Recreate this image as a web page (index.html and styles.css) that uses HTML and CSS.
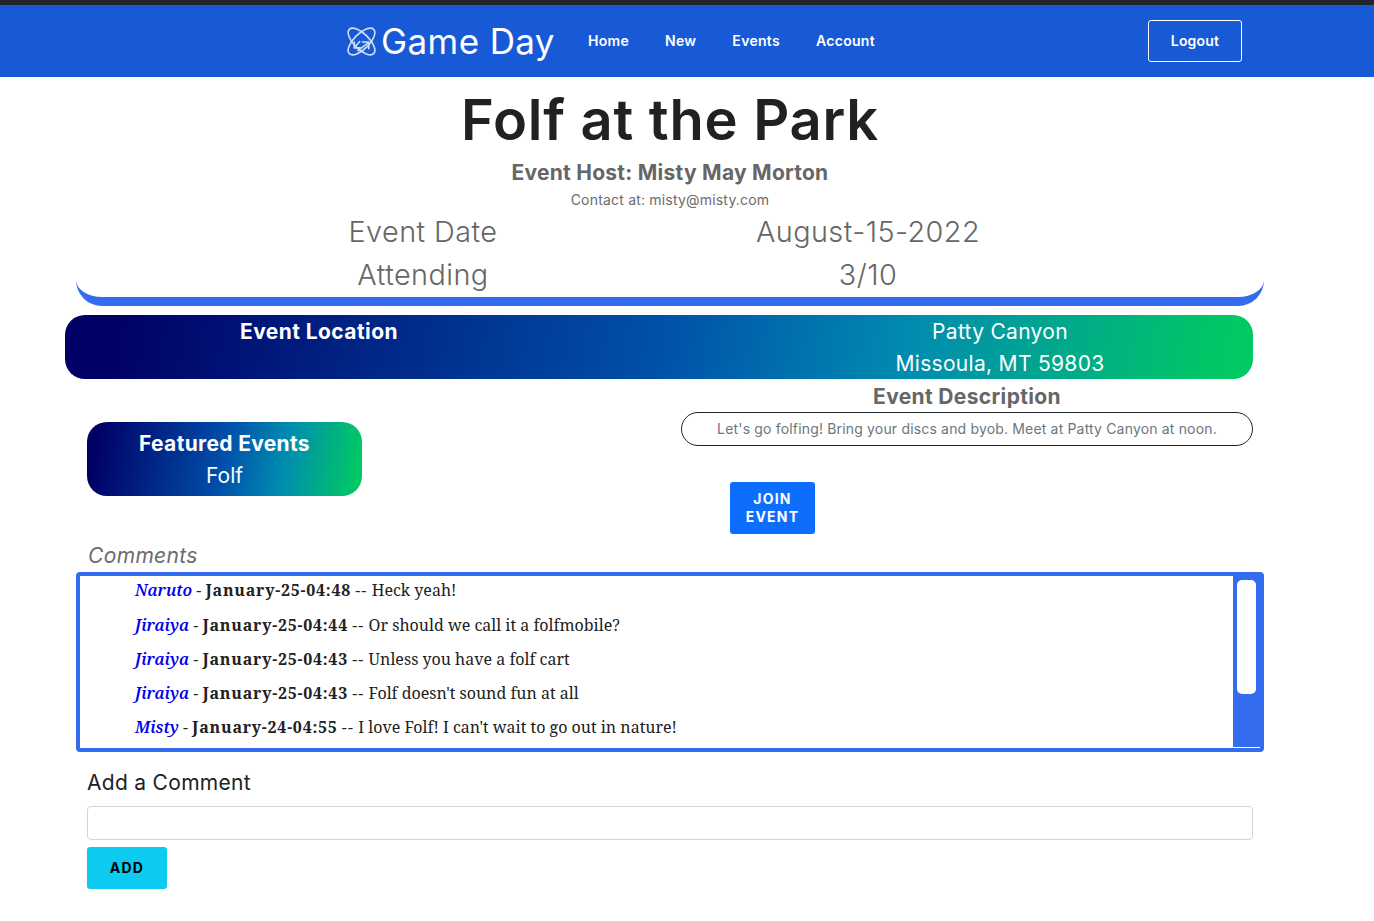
FILE: index.html
```html
<!DOCTYPE html>
<html lang="en">
<head>
<meta charset="utf-8">
<title>Game Day</title>
<link rel="stylesheet" href="styles.css">
</head>
<body>
<div class="topline"></div>
<nav class="nav">
  <a class="brand">
    <svg class="logo" viewBox="0 0 32 32" fill="none" stroke="currentColor" stroke-width="1.800" stroke-linecap="round" stroke-linejoin="round">
      <ellipse cx="16" cy="16" rx="19" ry="8.500" transform="rotate(45 16 16)"/>
      <ellipse cx="16" cy="16" rx="19" ry="8.500" transform="rotate(-45 16 16)"/>
      <path d="M14 16l-6 7M8 16.500V23h6.500"/>
      <path d="M12 26l12-9M17 16.500h7V24"/>
    </svg>
    <span>Game Day</span>
  </a>
  <a class="link">Home</a>
  <a class="link">New</a>
  <a class="link">Events</a>
  <a class="link">Account</a>
  <a class="logout">Logout</a>
</nav>
<main class="page">
  <h1 class="title">Folf at the Park</h1>
  <h2 class="host">Event Host: Misty May Morton</h2>
  <p class="contact">Contact at: misty@misty.com</p>
  <section class="facts">
    <div class="fact"><span class="fact-l">Event Date</span><span class="fact-r">August-15-2022</span></div>
    <div class="fact"><span class="fact-l">Attending</span><span class="fact-r">3/10</span></div>
  </section>
  <section class="location">
    <h3 class="loc-head">Event Location</h3>
    <div class="loc-addr"><div>Patty Canyon</div><div>Missoula, MT 59803</div></div>
  </section>
  <section class="mid">
    <div class="featured">
      <h3 class="feat-head">Featured Events</h3>
      <div class="feat-item">Folf</div>
    </div>
    <div class="desc">
      <h3 class="desc-head">Event Description</h3>
      <p class="desc-box">Let's go folfing! Bring your discs and byob. Meet at Patty Canyon at noon.</p>
    </div>
  </section>
  <div class="join-row"><button class="join">Join<br>Event</button></div>
  <h4 class="comments-head">Comments</h4>
  <section class="comments">
    <ul class="comment-list">
      <li><a class="who">Naruto</a> - <b>January-25-04:48</b> <span class="sep">--</span> Heck yeah!</li>
      <li><a class="who">Jiraiya</a> - <b>January-25-04:44</b> <span class="sep">--</span> Or should we call it a folfmobile?</li>
      <li><a class="who">Jiraiya</a> - <b>January-25-04:43</b> <span class="sep">--</span> Unless you have a folf cart</li>
      <li><a class="who">Jiraiya</a> - <b>January-25-04:43</b> <span class="sep">--</span> Folf doesn't sound fun at all</li>
      <li><a class="who">Misty</a> - <b>January-24-04:55</b> <span class="sep">--</span> I love Folf! I can't wait to go out in nature!</li>
    </ul>
    <div class="track"><div class="thumb"></div></div>
  </section>
  <label class="add-label" for="c">Add a Comment</label>
  <input class="add-input" id="c" type="text">
  <button class="add">Add</button>
</main>
</body>
</html>
```
FILE: styles.css
```css
* { box-sizing: border-box; }
html, body { margin: 0; padding: 0; }
body { background: #fff; color: #212121; font-family: Inter, sans-serif; height: 921px; overflow: hidden; }
.topline { height: 5px; background: #212529; }
.nav { height: 72px; background: #185ad6; display: flex; align-items: center; padding: 0 132px 0 347px; color: #fff; }
.brand { display: flex; align-items: center; gap: 5px; font-size: 35px; margin-right: 15px; line-height: 42px; letter-spacing: .4px; }
.logo { width: 29px; height: 29px; opacity: .8; overflow: visible; }
.link { font-size: 14px; font-weight: 600; margin: 0 18px 2px; letter-spacing: .3px; }
.logout { margin-left: auto; border: 1px solid #fff; border-radius: 3px; width: 94px; height: 42px; padding-bottom: 2px; display: flex; align-items: center; justify-content: center; font-size: 14px; font-weight: 600; letter-spacing: .2px; }
.page { padding: 0 110px 0 76px; width: 1374px; }
.title { margin: 10px 0 0; text-align: center; font-size: 56px; font-weight: 600; line-height: 67px; width: 1188px; letter-spacing: .75px; }
.host { margin: 6px 0 0; text-align: center; font-size: 21px; font-weight: 700; line-height: 25px; color: #666; width: 1188px; letter-spacing: .25px; }
.contact { margin: 6px 0 0; text-align: center; font-size: 14px; line-height: 17px; color: #6c6c6c; width: 1188px; letter-spacing: .19px; }
.facts { width: 1188px; height: 97px; margin-top: 1px; padding-top: 1px; border-bottom: 9px solid #346cf0; border-radius: 0 0 26px 26px; }
.fact { display: flex; height: 43px; align-items: center; font-size: 28.800px; font-weight: 300; color: #666; line-height: 34px; letter-spacing: .45px; }
.fact-l { width: 594px; padding-left: 100px; text-align: center; }
.fact-r { width: 396px; text-align: center; white-space: nowrap; }
.location { width: 1188px; height: 64px; margin: 9px 0 0 -11px; padding-top: 1px; border-radius: 20px; background: linear-gradient(100deg, #000066 4%, #0050aa 50%, #008cb0 71%, #00c864 97%); color: #fff; display: flex; }
.loc-head { margin: 0; width: 508px; text-align: center; font-size: 21px; font-weight: 700; line-height: 32px; letter-spacing: .42px; }
.loc-addr { width: 354px; margin-left: 250px; text-align: center; font-size: 21px; line-height: 32px; letter-spacing: .3px; }
.mid { display: flex; width: 1188px; }
.featured { margin: 43px 0 0 11px; width: 275px; height: 74px; border-radius: 20px; background: linear-gradient(100deg, #000066 4%, #0050aa 50%, #008cb0 71%, #00c864 97%); color: #fff; text-align: center; padding-top: 6px; }
.feat-head { margin: 0; font-size: 21px; font-weight: 700; line-height: 32px; letter-spacing: .33px; }
.feat-item { font-size: 21px; line-height: 32px; }
.desc { margin-left: 319px; width: 572px; }
.desc-head { margin: 2px 0 0; text-align: center; font-size: 21px; font-weight: 700; line-height: 31px; color: #666; letter-spacing: .35px; }
.desc-box { margin: 0; height: 34px; border: 1px solid #212529; border-radius: 17px; text-align: center; font-size: 14px; line-height: 32px; color: #6c757d; letter-spacing: .17px; }
.join-row { width: 1188px; margin-top: -14px; padding-left: 654px; }
.join { display: block; width: 85px; height: 52px; border: 0; border-radius: 3px; background: #0d6efd; color: #fff; font: 700 14px/18px Inter, sans-serif; letter-spacing: 1.2px; text-transform: uppercase; padding: 0; }
.comments-head { margin: 9px 0 0 12px; font-size: 21px; font-weight: 400; font-style: italic; line-height: 25px; color: #6c6c6c; letter-spacing: .35px; }
.comments { width: 1188px; height: 180px; margin-top: 4px; border: 4px solid #346cf0; border-radius: 4px; display: flex; }
.comment-list { list-style: none; flex: 1; margin: 0; padding: .3px 0 0 55px; font-family: "Noto Serif", "DejaVu Serif", serif; font-size: 16px; }
.comment-list li { height: 34.250px; line-height: 29px; white-space: nowrap; }
.comment-list b { letter-spacing: .75px; }
.sep { letter-spacing: 1.200px; }
.who { color: #0000ee; font-style: italic; font-weight: 600; }
.track { width: 27px; background: #346cf0; padding: 4px 4px 0; margin-bottom: 1px; }
.thumb { width: 19px; height: 114px; background: #fff; border-radius: 5px; }
.add-label { display: block; margin: 17px 0 0 11px; font-size: 21px; line-height: 28px; letter-spacing: .3px; }
.add-input { display: block; width: 1166px; height: 34px; margin: 9px 0 0 11px; border: 1px solid #ced4da; border-radius: 4px; background: #fff; }
.add { display: block; width: 80px; height: 42px; margin: 7px 0 0 11px; padding: 0 0 2px; border: 0; border-radius: 3px; background: #0dcaf0; color: #000; font: 700 14px Inter, sans-serif; letter-spacing: 1.2px; text-transform: uppercase; }
```
